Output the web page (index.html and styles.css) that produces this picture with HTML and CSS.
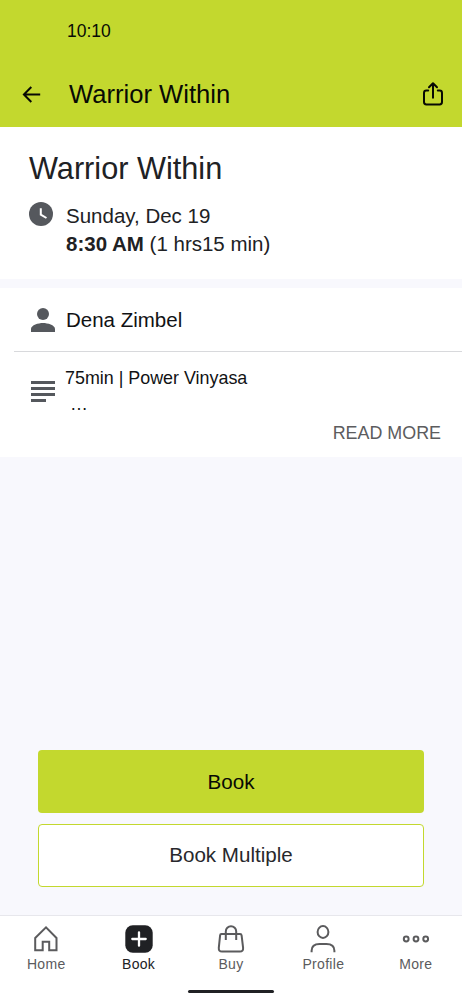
FILE: index.html
```html
<!DOCTYPE html>
<html lang="en">
<head>
<meta charset="utf-8">
<title>Warrior Within</title>
<link rel="stylesheet" href="styles.css">
</head>
<body>
<div class="app">
  <header class="header">
    <div class="status">10:10</div>
    <div class="bar">
      <svg class="back" width="20" height="20" viewBox="0 0 20 20"><path d="M18.200 10.500H2.200M9.300 3 1.900 10.500 9.300 18"/></svg>
      <div class="bar-title">Warrior Within</div>
      <svg class="share" width="22" height="26" viewBox="0 0 22 26"><path d="M6.200 9.500H4.400Q2 9.500 2 11.900v9.200Q2 23.500 4.400 23.500h13.200q2.400 0 2.400-2.400v-9.200Q20 9.500 17.600 9.500h-1.800M11 16.700V2.700M7 6.300 11 2.300l4 4"/></svg>
    </div>
  </header>
  <section class="summary">
    <h1 class="title">Warrior Within</h1>
    <div class="when">
      <svg class="clock" width="24" height="24" viewBox="0 0 24 24"><circle cx="12" cy="12" r="12"/><path d="M11.800 6.300v6.400l5.700 3.300"/></svg>
      <div class="when-text"><div>Sunday, Dec 19</div><div class="time"><b>8:30 AM</b> (1 hrs15 min)</div></div>
    </div>
  </section>
  <section class="details">
    <div class="teacher">
      <svg class="solid" width="24" height="24" viewBox="0 0 24 24"><circle cx="12" cy="6" r="6"/><path d="M0 24v-3c0-4 7.500-6 12-6s12 2 12 6v3z"/></svg>
      <span>Dena Zimbel</span>
    </div>
    <div class="about">
      <svg class="solid lines" width="24" height="22" viewBox="0 0 24 22"><path d="M0 0h24v3H0zM0 6h24v3H0zM0 12h24v3H0zM0 18h15v3H0z"/></svg>
      <div class="about-text">75min | Power Vinyasa<div class="dots">…</div></div>
    </div>
    <div class="read-more">READ MORE</div>
  </section>
  <main class="actions">
    <button class="btn primary">Book</button>
    <button class="btn outline">Book Multiple</button>
  </main>
  <nav class="tabs">
    <div class="tab">
      <svg width="28" height="28" viewBox="0 0 28 28"><path d="M3.200 13 14 2.400 24.500 13v12.200h-7.300v-8.400h-6.500v8.400H3.200z"/></svg>
      <span>Home</span>
    </div>
    <div class="tab active">
      <svg width="28" height="28" viewBox="0 0 28 28"><rect class="tile" x="0.300" y="0.200" width="27.400" height="27.600" rx="7.500"/><path class="plus" d="M14 7.300v13.400M7.300 14h13.400"/></svg>
      <span>Book</span>
    </div>
    <div class="tab">
      <svg width="28" height="28" viewBox="0 0 28 28"><path d="M4.400 9h18.700q1.300 0 1.500 1.300l1.500 12.500q.300 3.800-3.200 3.800H5q-3.500 0-3.200-3.800l1.300-12.500Q3.200 9 4.400 9zM8.800 15V6.500a5.200 5.200 0 0 1 10.400 0V15"/></svg>
      <span>Buy</span>
    </div>
    <div class="tab">
      <svg width="28" height="28" viewBox="0 0 28 28"><ellipse cx="14" cy="7" rx="5.400" ry="5.900"/><path d="M2.600 27.300v-1.500q0-6.800 8-6.800h6.800q8 0 8 6.800v1.500"/></svg>
      <span>Profile</span>
    </div>
    <div class="tab">
      <svg width="28" height="28" viewBox="0 0 28 28"><circle cx="4.200" cy="14" r="2.400"/><circle cx="14" cy="14" r="2.400"/><circle cx="23.700" cy="14" r="2.400"/></svg>
      <span>More</span>
    </div>
  </nav>
  <div class="home-strip"><div class="handle"></div></div>
</div>
</body>
</html>
```
FILE: styles.css
```css
* { box-sizing: border-box; }
body { margin: 0; font-family: "Liberation Sans", Arial, sans-serif; color: #202124; }
svg { display: block; flex: none; fill: none; }
.app { width: 462px; height: 1000px; display: flex; flex-direction: column; background: #f8f8fd; }
.header { height: 127px; background: #c3d82e; color: #080a04; }
.status { padding: 20px 0 0 67px; height: 61px; font-size: 17.5px; line-height: 22px; }
.bar { height: 66px; display: flex; align-items: center; padding: 0 18px 0 22px; }
.back { stroke: #080a04; stroke-width: 2; }
.bar-title { flex: 1; padding-left: 27px; font-size: 25.6px; line-height: 32px; }
.share { stroke: #080a04; stroke-width: 2; stroke-linejoin: round; stroke-linecap: round; }
.summary { height: 152px; padding: 23px 29px 0; background: #fff; }
.title { margin: 0; font-size: 30.7px; font-weight: 400; line-height: 38px; }
.when { display: flex; gap: 13px; padding-top: 14px; font-size: 20.5px; line-height: 28px; }
.clock circle { fill: #55585d; }
.clock path { stroke: #fff; stroke-width: 2; }
.details { height: 169px; margin-top: 9px; background: #fff; }
.teacher { height: 64px; margin-left: 14px; padding-left: 16.500px; display: flex; align-items: center; gap: 11.500px; border-bottom: 1px solid #d8d9dc; font-size: 20.5px; color: #111214; }
.solid { fill: #55585d; }
.about { display: flex; gap: 10.500px; padding: 12px 0 0 30.500px; height: 68px; font-size: 17.900px; line-height: 28px; color: #111214; }
.lines { margin-top: 17px; }
.dots { padding-left: 5px; margin-top: -2px; }
.read-more { padding-right: 21px; text-align: right; font-size: 17.900px; line-height: 26px; color: #5c5c5e; }
.actions { flex: 1; display: flex; flex-direction: column; justify-content: flex-end; gap: 11px; padding: 0 38px 28px; }
.btn { height: 63px; padding: 0; border: 0; border-radius: 4px; font: 20.6px/24px "Liberation Sans", Arial, sans-serif; }
.primary { background: #c3d82e; color: #080a04; }
.outline { background: #fff; border: 1px solid #c3d82e; color: #28282c; padding-bottom: 1px; }
.tabs { display: grid; grid-template-columns: repeat(5, 1fr); height: 63px; padding-top: 9px; background: #fff; border-top: 1px solid #e7e7ec; }
.tab { display: flex; flex-direction: column; align-items: center; font-size: 14px; line-height: 18px; letter-spacing: .3px; color: #5b5b5d; }
.tab svg { stroke: currentColor; stroke-width: 2; }
.tab span { margin-top: 2px; }
.active { color: #202124; }
.tab .tile { fill: #202124; stroke: none; }
.tab .plus { stroke: #fff; stroke-width: 2.300; stroke-linecap: round; }
.home-strip { height: 22px; padding-top: 12px; background: #fff; }
.handle { width: 86px; height: 3px; margin: 0 auto; border-radius: 2px; background: #202124; }
```
